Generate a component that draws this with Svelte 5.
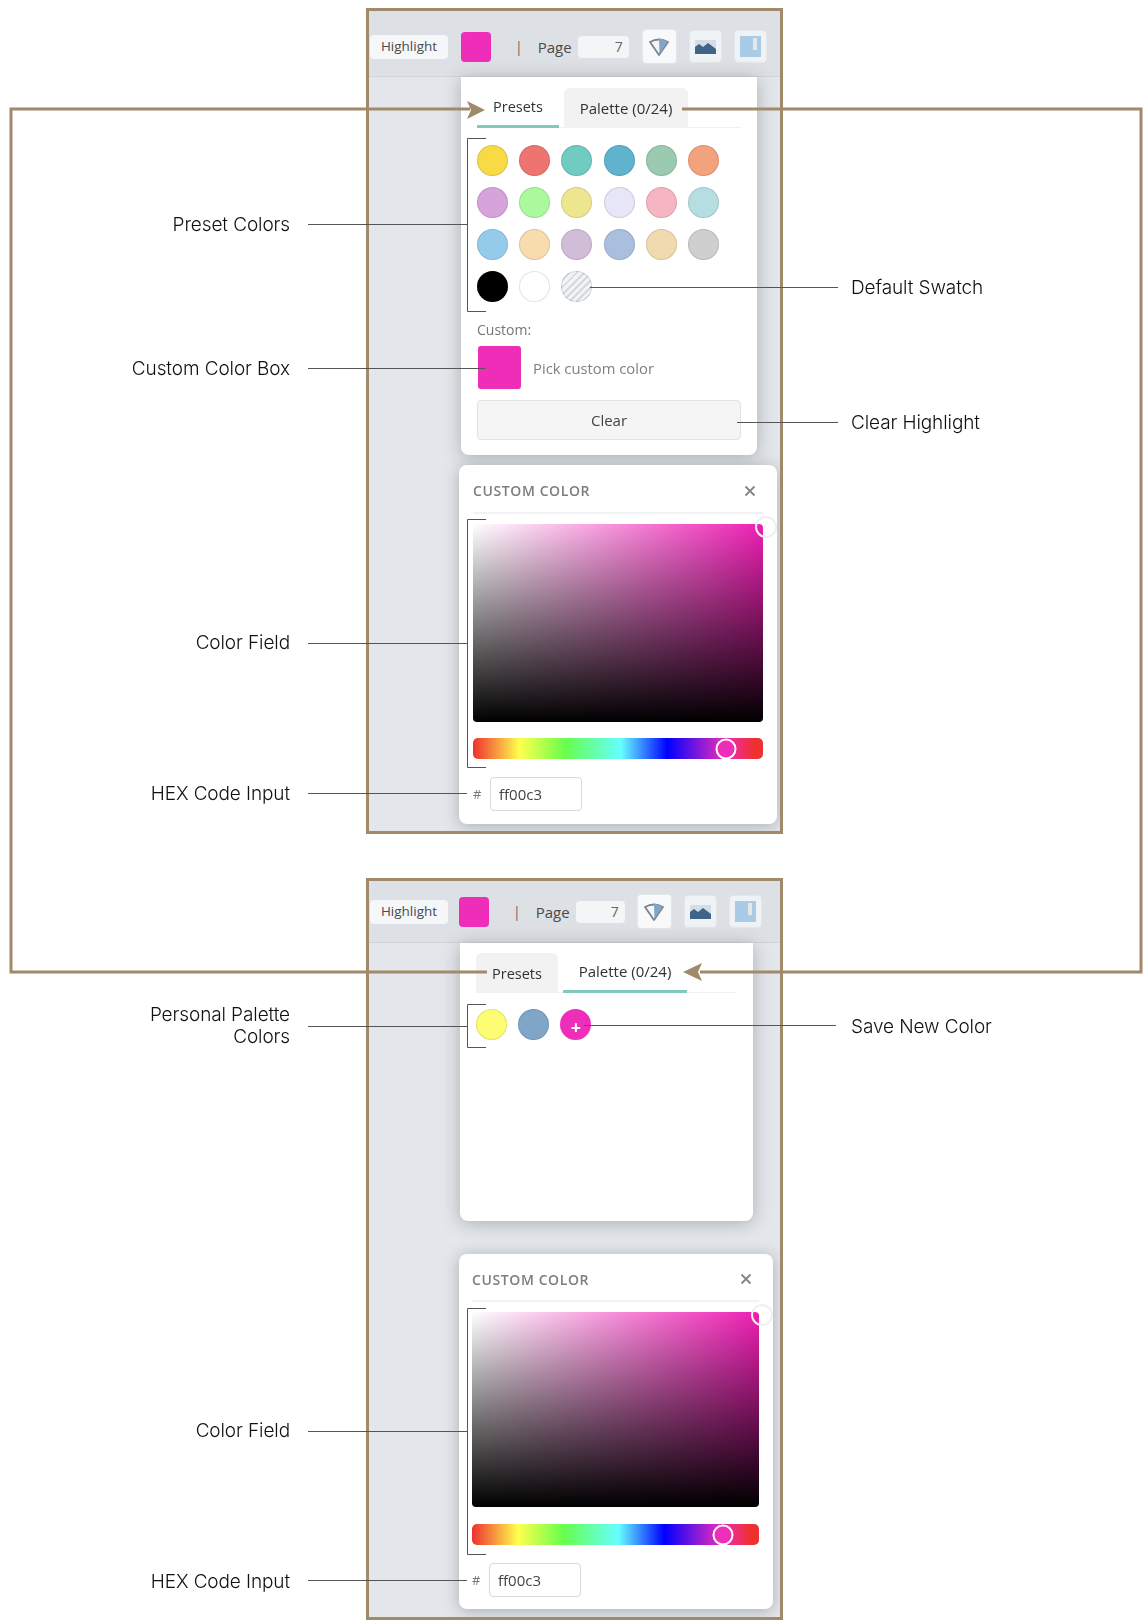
<script>
	const presets = [
		'#f8da45', '#ee756f', '#70cbc0', '#5fb3cd', '#9bcab0', '#f2a27c',
		'#d7a3db', '#abf99d', '#eee68e', '#e6e6f8', '#f5b5c3', '#b6dde2',
		'#95cbea', '#f8dcae', '#d2bdd8', '#aabfde', '#f1dab0', '#cfcfcf',
		'#000000', '#ffffff'
	];

	// annotation labels on the canvas: right-aligned ones give their right edge
	const leftLabels = [
		{ y: 225, text: 'Preset Colors' },
		{ y: 369, text: 'Custom Color Box' },
		{ y: 643, text: 'Color Field' },
		{ y: 794, text: 'HEX Code Input' },
		{ y: 1026, text: 'Personal Palette<br>Colors' },
		{ y: 1431, text: 'Color Field' },
		{ y: 1582, text: 'HEX Code Input' }
	];
	const rightLabels = [
		{ y: 288, text: 'Default Swatch' },
		{ y: 423, text: 'Clear Highlight' },
		{ y: 1027, text: 'Save New Color' }
	];

	const brackets = [
		[138, 311],
		[519, 767],
		[1004, 1047],
		[1308, 1554]
	];
	const thinLines = [
		[308, 224, 467],
		[308, 368, 485],
		[308, 643, 467],
		[308, 793, 467],
		[590, 287, 838],
		[737, 422, 838],
		[308, 1026, 467],
		[584, 1025, 836],
		[308, 1431, 467],
		[308, 1580, 467]
	];
</script>

{#snippet toolbar()}
	<div class="toolbar">
		<span class="mode">Highlight</span>
		<span class="current"></span>
		<span class="sep">|</span>
		<span class="page-label">Page</span>
		<span class="page-input">7</span>
		<span class="tool large">
			<svg width="22" height="20" viewBox="0 0 22 20">
				<path d="M2 5 Q11 0 20 5 L11 18 Z" fill="#f4f5f6" stroke="#7d8388" stroke-width="1.8" stroke-linejoin="round" />
				<path d="M11 1.5 Q16 2 19.5 5 L11.5 17 Z" fill="#7fa6c6" />
			</svg>
		</span>
		<span class="tool">
			<svg width="21" height="14" viewBox="0 0 21 14">
				<rect width="21" height="14" fill="#d3dde6" />
				<path d="M0 14 V7 L4 4 L8 7 L13 3 L21 9 V14 Z" fill="#3f6487" />
			</svg>
		</span>
		<span class="tool">
			<svg width="21" height="21" viewBox="0 0 21 21">
				<rect width="21" height="21" fill="#a9cbe6" />
				<rect x="13" y="2" width="4" height="12" fill="#e4e8e6" />
			</svg>
		</span>
	</div>
{/snippet}

{#snippet picker(handleX)}
	<div class="picker">
		<div class="picker-head">
			<span class="picker-title">CUSTOM COLOR</span>
			<svg class="close" width="12" height="12" viewBox="0 0 12 12">
				<path d="M1.5 1.5 L10.5 10.5 M10.5 1.5 L1.5 10.5" stroke="#858585" stroke-width="1.8" />
			</svg>
		</div>
		<div class="field"><span class="field-handle"></span></div>
		<div class="hue"><span class="hue-handle" style="left: {handleX}%"></span></div>
		<div class="hex-row">
			<span class="hash">#</span>
			<span class="hex-input">ff00c3</span>
		</div>
	</div>
{/snippet}

<div class="canvas">
	<section class="frame first">
		<div class="shot">
			{@render toolbar()}
			<div class="work">
				<div class="panel presets-panel">
					<div class="tabs">
						<span class="tab active presets-tab">Presets</span>
						<span class="tab idle palette-tab">Palette (0/24)</span>
					</div>
					<div class="swatches">
						{#each presets as color}
							<span class="swatch" style="background: {color}"></span>
						{/each}
						<span class="swatch none"></span>
					</div>
					<div class="custom-label">Custom:</div>
					<div class="custom-row">
						<span class="custom-box"></span>
						<span class="custom-hint">Pick custom color</span>
					</div>
					<div class="clear">Clear</div>
				</div>
				{@render picker(87.2)}
			</div>
		</div>
	</section>

	<section class="frame second">
		<div class="shot">
			{@render toolbar()}
			<div class="work">
				<div class="panel palette-panel">
					<div class="tabs">
						<span class="tab idle presets-tab">Presets</span>
						<span class="tab active palette-tab">Palette (0/24)</span>
					</div>
					<div class="swatches">
						<span class="swatch" style="background: #fdfd74"></span>
						<span class="swatch" style="background: #7fa6c9"></span>
						<span class="swatch add">+</span>
					</div>
				</div>
				{@render picker(87.4)}
			</div>
		</div>
	</section>

	<svg class="overlay" width="1146" height="1624" viewBox="0 0 1146 1624">
		<g fill="none" stroke="#a08a6b" stroke-width="3">
			<path d="M470 109 H11 V972 H487" />
			<path d="M682 109 H1141 V972 H700" />
		</g>
		<path d="M485 110 L467 101 L471 110 L467 119 Z" fill="#a08a6b" />
		<path d="M683 972 L702 963 L698 972 L702 981 Z" fill="#a08a6b" />
		<g fill="none" stroke="#555" stroke-width="1">
			{#each brackets as [top, bottom]}
				<path d="M486 {top + 0.5} H467.5 V{bottom + 0.5} H486" />
			{/each}
			{#each thinLines as [x1, y, x2]}
				<path d="M{x1} {y + 0.5} H{x2}" />
			{/each}
		</g>
	</svg>

	{#each leftLabels as label}
		<div class="label left" style="top: {label.y}px">{@html label.text}</div>
	{/each}
	{#each rightLabels as label}
		<div class="label right" style="top: {label.y}px">{label.text}</div>
	{/each}
</div>

<style>
	:global(body) {
		background: #fff;
	}

	.canvas {
		position: relative;
		width: 1146px;
		height: 1624px;
		overflow: hidden;
		font-family: "Open Sans", "Liberation Sans", sans-serif;
		color: #333;
	}

	.overlay {
		position: absolute;
		inset: 0;
		pointer-events: none;
	}

	.label {
		position: absolute;
		font-family: Inter, "Liberation Sans", sans-serif;
		font-weight: 300;
		font-size: 19px;
		line-height: 22px;
		letter-spacing: -0.1px;
		color: #111;
		transform: translateY(-50%);
	}

	.label.left {
		right: 856px;
		text-align: right;
	}

	.label.right {
		left: 851px;
	}

	.frame {
		position: absolute;
		left: 366px;
		width: 417px;
		box-sizing: border-box;
		border: 3px solid #a08a6b;
		background: #e3e6ea;
		overflow: hidden;
	}

	.frame.first {
		top: 8px;
		height: 826px;
	}

	.frame.second {
		top: 878px;
		height: 742px;
	}

	/* the reference is an upscaled capture, slightly soft */
	.shot {
		height: 100%;
		display: flex;
		flex-direction: column;
		filter: blur(0.4px);
	}

	.toolbar {
		flex: none;
		height: 66px;
		box-sizing: border-box;
		background: #dde0e5;
		border-bottom: 1px solid #d0d3d7;
		display: flex;
		align-items: center;
		padding: 6px 0 0 1px;
		font-size: 14px;
	}

	.second .toolbar {
		height: 62px;
		padding-top: 0;
	}

	.mode {
		width: 78px;
		height: 24px;
		line-height: 23px;
		text-align: center;
		background: #f6f7f9;
		border-radius: 4px;
		font-size: 13.5px;
		font-weight: 500;
		color: #454a4f;
	}

	.current {
		width: 30px;
		height: 30px;
		margin-left: 13px;
		border-radius: 4px;
		background: #ee2db9;
	}

	.second .current {
		margin-left: 11px;
	}

	.sep {
		margin-left: 24px;
		color: #666;
	}

	.page-label {
		margin-left: 15px;
		font-size: 15px;
		color: #4a4a4a;
	}

	.page-input {
		width: 51px;
		height: 22px;
		line-height: 21px;
		margin-left: 6px;
		padding-right: 6px;
		box-sizing: border-box;
		text-align: right;
		background: #f3f5f7;
		border-radius: 4px;
		color: #666;
	}

	.second .page-input {
		width: 49px;
	}

	.tool {
		width: 33px;
		height: 33px;
		margin-left: 12px;
		box-sizing: border-box;
		display: flex;
		align-items: center;
		justify-content: center;
		background: #f0f3f6;
		border: 1px solid #e4e7ea;
		border-radius: 4px;
	}

	.tool.large {
		width: 35px;
		height: 35px;
		margin-left: 13px;
		background: #f8f9fa;
	}

	.second .tool.large {
		margin-left: 12px;
	}

	.work {
		position: relative;
		flex: 1;
		display: flex;
		flex-direction: column;
		align-items: flex-start;
		padding-left: 90px;
	}

	.panel {
		box-sizing: border-box;
		background: #fff;
		box-shadow: 0 2px 18px rgba(80, 85, 90, 0.38);
		border-radius: 0 0 8px 8px;
	}

	.presets-panel {
		width: 296px;
		height: 378px;
		margin: 0 0 10px 2px;
		padding: 11px 16px 0;
	}

	.palette-panel {
		width: 293px;
		height: 278px;
		margin: 0 0 33px 1px;
		padding: 10px 16px 0;
	}

	.tabs {
		display: flex;
		height: 39px;
		border-bottom: 1px solid #f0f1f2;
		font-size: 14.5px;
	}

	.tab {
		box-sizing: border-box;
		height: 40px;
		line-height: 37px;
		text-align: center;
		color: #2f3337;
	}

	.tab.active {
		border-bottom: 3px solid #7ecbbd;
	}

	.tab.idle {
		line-height: 41px;
		background: #f2f2f2;
		border-radius: 6px 6px 0 0;
	}

	.presets-tab {
		width: 82px;
		margin-right: 5px;
	}

	.palette-tab {
		width: 124px;
		font-size: 15px;
	}

	.swatches {
		display: grid;
		grid-template-columns: repeat(6, 31px);
		gap: 11px 11.2px;
		padding-top: 17px;
	}

	.palette-panel .swatches {
		padding-top: 16px;
	}

	.swatch {
		width: 31px;
		height: 31px;
		box-sizing: border-box;
		border-radius: 50%;
		border: 1.5px solid rgba(0, 0, 0, 0.11);
	}

	.swatch.none {
		background: repeating-linear-gradient(135deg, #d5d8dc 0 2px, #f2f3f5 2px 5px);
	}

	.swatch.add {
		background: #ee2db9;
		border: none;
		color: #fff;
		font-size: 18px;
		font-weight: 700;
		line-height: 37px;
		text-align: center;
	}

	.custom-label {
		margin-top: 18px;
		font-size: 14px;
		line-height: 20px;
		color: #777;
	}

	.custom-row {
		display: flex;
		align-items: center;
		gap: 12px;
		margin-top: 6px;
		padding-left: 1px;
	}

	.custom-box {
		width: 43px;
		height: 43px;
		border-radius: 3px;
		background: #ee2db9;
	}

	.custom-hint {
		font-size: 14.8px;
		color: #808080;
	}

	.clear {
		height: 40px;
		margin-top: 11px;
		box-sizing: border-box;
		line-height: 38px;
		text-align: center;
		font-size: 15px;
		color: #444;
		background: #f5f5f5;
		border: 1px solid #e2e2e2;
		border-radius: 4px;
	}

	.picker {
		box-sizing: border-box;
		width: 318px;
		height: 359px;
		padding: 0 14px;
		background: #fff;
		border-radius: 8px;
		box-shadow: 0 2px 16px rgba(80, 85, 90, 0.38);
	}

	.second .picker {
		width: 314px;
		height: 355px;
		padding: 0 14px 0 13px;
	}

	.picker-head {
		display: flex;
		align-items: center;
		justify-content: space-between;
		box-sizing: border-box;
		height: 49px;
		padding: 4px 7px 0 0;
		border-bottom: 2px solid #f1f2f3;
		margin-bottom: 10px;
	}

	.second .picker-head {
		height: 48px;
	}

	.picker-title {
		font-size: 14px;
		font-weight: 600;
		letter-spacing: 0.6px;
		color: #7d7d7d;
	}

	.field {
		position: relative;
		height: 198px;
		border-radius: 4px;
		background:
			linear-gradient(to top, #000, rgba(0, 0, 0, 0)),
			linear-gradient(to right, #fff, #ee1fb4);
	}

	.second .field {
		height: 195px;
	}

	.field-handle {
		position: absolute;
		top: -8px;
		right: -14px;
		width: 22px;
		height: 22px;
		box-sizing: border-box;
		border-radius: 50%;
		border: 2px solid #f0f0f0;
	}

	.hue {
		position: relative;
		height: 21px;
		margin-top: 16px;
		border-radius: 5px;
		background: linear-gradient(to right, #ee3030 0%, #ffff4d 16%, #66ff4d 32%, #66ffff 51%, #0000ff 67%, #ee2db9 87%, #ee3030 97%);
	}

	.second .hue {
		margin-top: 17px;
	}

	.hue-handle {
		position: absolute;
		top: 50%;
		width: 21px;
		height: 21px;
		box-sizing: border-box;
		transform: translate(-50%, -50%);
		border-radius: 50%;
		border: 2px solid #fff;
		background: #ee2db9;
	}

	.hex-row {
		display: flex;
		align-items: center;
		margin-top: 18px;
	}

	.hash {
		width: 17px;
		font-size: 13px;
		color: #777;
	}

	.hex-input {
		box-sizing: border-box;
		width: 92px;
		height: 34px;
		line-height: 32px;
		padding-left: 8px;
		font-size: 15px;
		color: #444;
		background: #fff;
		border: 1px solid #d8d8d8;
		border-radius: 4px;
	}
</style>
